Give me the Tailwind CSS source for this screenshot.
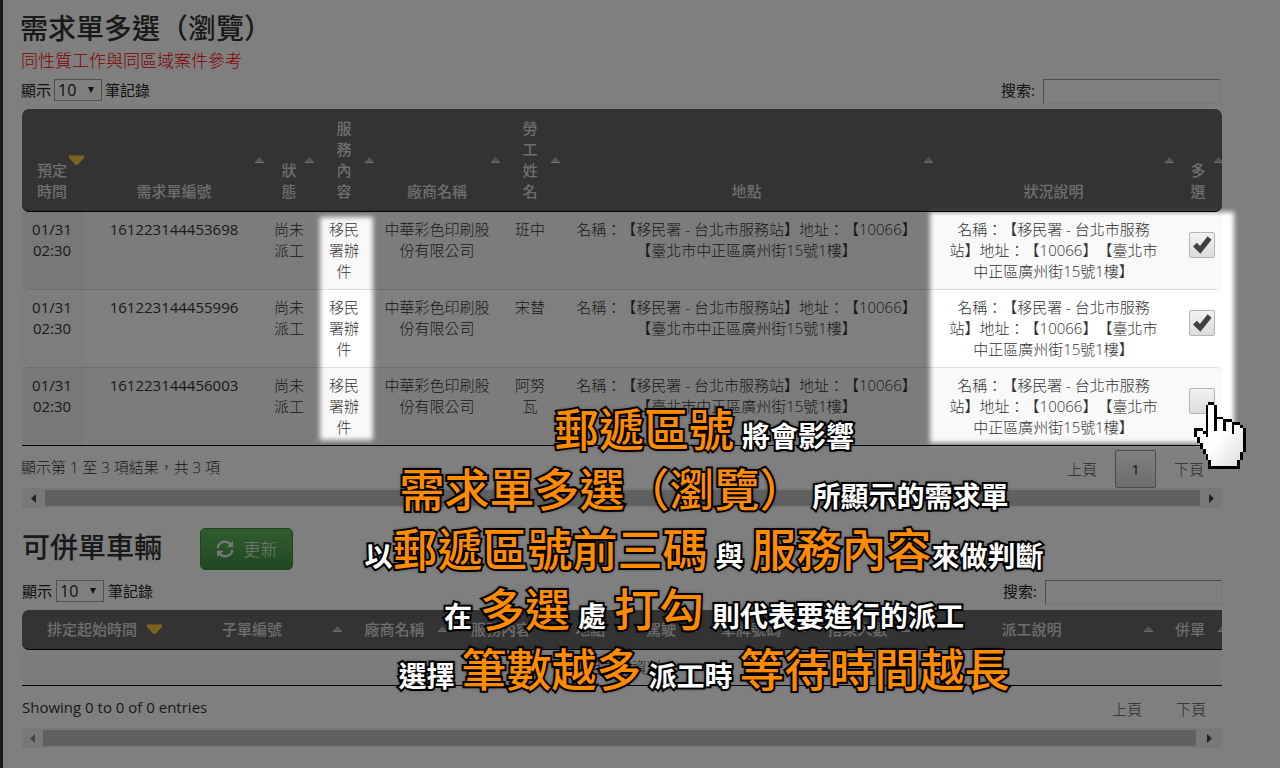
<!DOCTYPE html>
<html lang="zh-Hant">
<head>
<meta charset="utf-8">
<title>需求單多選（瀏覽）</title>
<script src="https://cdn.jsdelivr.net/npm/@tailwindcss/browser@4"></script>
</head>
<body class="relative min-h-screen overflow-hidden bg-white font-['Open_Sans','Noto_Sans_CJK_TC',sans-serif] text-[15px] leading-[21px] text-[#333] [text-spacing-trim:space-all]">
<svg class="hidden" aria-hidden="true">
  <symbol id="up" viewBox="0 0 9 7"><path d="M4.5 0L9 5H0z" fill="#aaa"/><path d="M0 5h9v1H0z" fill="#ddd"/></symbol>
  <symbol id="down" viewBox="0 0 15 10"><path d="M0 0h15v3L8.500 10h-2L0 3z" fill="#f0c64a"/><path d="M0 0h15v1H0z" fill="#c99a2e"/></symbol>
  <symbol id="tick" viewBox="0 0 20 20"><path d="M1 11.500L4.800 7.800L8 11L15.600 1.200L19.600 4.800L8.400 18.800z" fill="#414141"/></symbol>
</svg>

<main class="min-h-screen border-l-3 border-[#333] pr-[58px] pt-2">
  <h1 class="pl-[17px] text-[28px] font-medium leading-10">需求單多選（瀏覽）</h1>
  <p class="pl-[18px] text-[17px] font-light leading-[26px] text-[#f00]">同性質工作與同區域案件參考</p>

  <div class="mt-[5px] flex h-[30px] items-start justify-between pl-[18px] pr-[2px] text-[#222]">
    <label class="flex items-center gap-[3px]">顯示
      <span class="relative block">
        <select class="block h-[22px] w-12 appearance-none border border-[#a0a0a0] bg-white pl-[3px] text-base leading-5"><option>10</option></select>
        <svg class="pointer-events-none absolute right-2 top-2 h-[6px] w-[6px]" viewBox="0 0 6 6"><path d="M0 0h6L3 6z" fill="#222"/></svg>
      </span>筆記錄</label>
    <label class="flex items-start gap-2"><span class="leading-[22px]">搜索:</span><input type="search" class="h-[25px] w-[177px] appearance-none border border-b-[#eee] border-l-[#999] border-r-[#eee] border-t-[#999] bg-white px-1"></label>
  </div>

  <div class="overflow-hidden pl-[19px]">
    <table class="w-full table-fixed border-separate border-spacing-0 border-b border-black text-center font-light">
      <colgroup><col class="w-[62px]"><col class="w-[180px]"><col class="w-[50px]"><col class="w-[60px]"><col class="w-[126px]"><col class="w-[60px]"><col><col class="w-[241px]"><col class="w-[48px]"></colgroup>
      <thead class="text-[#ddd]">
        <tr>
          <th class="relative rounded-l-[7px] border-b border-black bg-[#666] pl-3 pr-[14px] py-[9px] align-bottom font-medium">預定時間<svg class="absolute right-0 top-[46px] h-[10px] w-[15px]"><use href="#down"/></svg></th>
          <th class="relative border-b border-black bg-[#666] py-[9px] align-bottom font-medium">需求單編號<svg class="absolute right-0 top-12 h-[7px] w-[9px]"><use href="#up"/></svg></th>
          <th class="relative border-b border-black bg-[#666] px-4 py-[9px] align-bottom font-medium">狀態<svg class="absolute right-0 top-12 h-[7px] w-[9px]"><use href="#up"/></svg></th>
          <th class="relative border-b border-black bg-[#666] px-5 py-[9px] align-bottom font-medium">服務內容<svg class="absolute right-0 top-12 h-[7px] w-[9px]"><use href="#up"/></svg></th>
          <th class="relative border-b border-black bg-[#666] py-[9px] align-bottom font-medium">廠商名稱<svg class="absolute right-0 top-12 h-[7px] w-[9px]"><use href="#up"/></svg></th>
          <th class="relative border-b border-black bg-[#666] px-5 py-[9px] align-bottom font-medium">勞工姓名<svg class="absolute right-0 top-12 h-[7px] w-[9px]"><use href="#up"/></svg></th>
          <th class="relative border-b border-black bg-[#666] py-[9px] align-bottom font-medium">地點<svg class="absolute right-0 top-12 h-[7px] w-[9px]"><use href="#up"/></svg></th>
          <th class="relative border-b border-black bg-[#666] py-[9px] align-bottom font-medium">狀況說明<svg class="absolute right-0 top-12 h-[7px] w-[9px]"><use href="#up"/></svg></th>
          <th class="relative overflow-hidden rounded-r-[7px] border-b border-black bg-[#666] px-4 py-[9px] align-bottom font-medium">多選<svg class="absolute -right-px top-12 h-[7px] w-[9px]"><use href="#up"/></svg></th>
        </tr>
      </thead>
      <tbody class="align-top">
        <tr class="bg-[#f9f9f9]">
          <td class="rounded-bl-md bg-[#f1f1f1] pl-[6px] pr-2 py-[7px] font-normal">01/31 02:30</td>
          <td class="py-[7px] font-normal">161223144453698</td>
          <td class="px-2 py-[7px]">尚未派工</td>
          <td class="px-[14px] py-[7px]">移民署辦件</td>
          <td class="px-[10px] py-[7px]">中華彩色印刷股份有限公司</td>
          <td class="px-[14px] py-[7px]">班中</td>
          <td class="px-4 py-[7px]">名稱：【移民署 - 台北市服務站】地址：【10066】【臺北市中正區廣州街15號1樓】</td>
          <td class="px-3 py-[7px]">名稱：【移民署 - 台北市服務站】地址：【10066】【臺北市中正區廣州街15號1樓】</td>
          <td class="pl-[15px] pt-5"><label class="relative block h-[26px] w-[26px]"><input type="checkbox" checked aria-label="選擇 161223144453698" class="peer block h-[26px] w-[26px] appearance-none rounded-xs border border-[#b5b5b5] bg-linear-to-b from-[#f2f2f2] to-[#dcdcdc]"><svg class="absolute left-[3px] top-[3px] hidden h-5 w-5 peer-checked:block"><use href="#tick"/></svg></label></td>
        </tr>
        <tr>
          <td class="rounded-tl-md border-t border-[#ddd] bg-[#fafafa] pl-[6px] pr-2 py-[7px] font-normal">01/31 02:30</td>
          <td class="border-t border-[#ddd] py-[7px] font-normal">161223144455996</td>
          <td class="border-t border-[#ddd] px-2 py-[7px]">尚未派工</td>
          <td class="border-t border-[#ddd] px-[14px] py-[7px]">移民署辦件</td>
          <td class="border-t border-[#ddd] px-[10px] py-[7px]">中華彩色印刷股份有限公司</td>
          <td class="border-t border-[#ddd] px-[14px] py-[7px]">宋替</td>
          <td class="border-t border-[#ddd] px-4 py-[7px]">名稱：【移民署 - 台北市服務站】地址：【10066】【臺北市中正區廣州街15號1樓】</td>
          <td class="border-t border-[#ddd] px-3 py-[7px]">名稱：【移民署 - 台北市服務站】地址：【10066】【臺北市中正區廣州街15號1樓】</td>
          <td class="rounded-tr-md border-t border-[#ddd] pl-[15px] pt-5"><label class="relative block h-[26px] w-[26px]"><input type="checkbox" checked aria-label="選擇 161223144455996" class="peer block h-[26px] w-[26px] appearance-none rounded-xs border border-[#b5b5b5] bg-linear-to-b from-[#f2f2f2] to-[#dcdcdc]"><svg class="absolute left-[3px] top-[3px] hidden h-5 w-5 peer-checked:block"><use href="#tick"/></svg></label></td>
        </tr>
        <tr class="bg-[#f9f9f9]">
          <td class="rounded-tl-md border-t border-[#ddd] bg-[#f1f1f1] pl-[6px] pr-2 py-[7px] font-normal">01/31 02:30</td>
          <td class="border-t border-[#ddd] py-[7px] font-normal">161223144456003</td>
          <td class="border-t border-[#ddd] px-2 py-[7px]">尚未派工</td>
          <td class="border-t border-[#ddd] px-[14px] py-[7px]">移民署辦件</td>
          <td class="border-t border-[#ddd] px-[10px] py-[7px]">中華彩色印刷股份有限公司</td>
          <td class="border-t border-[#ddd] px-[14px] py-[7px]">阿努瓦</td>
          <td class="border-t border-[#ddd] px-4 py-[7px]">名稱：【移民署 - 台北市服務站】地址：【10066】【臺北市中正區廣州街15號1樓】</td>
          <td class="border-t border-[#ddd] px-3 py-[7px]">名稱：【移民署 - 台北市服務站】地址：【10066】【臺北市中正區廣州街15號1樓】</td>
          <td class="rounded-tr-md border-t border-[#ddd] pl-[15px] pt-5"><label class="relative block h-[26px] w-[26px]"><input type="checkbox" aria-label="選擇 161223144456003" class="peer block h-[26px] w-[26px] appearance-none rounded-xs border border-[#b5b5b5] bg-linear-to-b from-[#f2f2f2] to-[#dcdcdc]"><svg class="absolute left-[3px] top-[3px] hidden h-5 w-5 peer-checked:block"><use href="#tick"/></svg></label></td>
        </tr>
      </tbody>
    </table>
  </div>

  <div class="mt-1 flex h-[38px] items-center justify-between pl-[18px] font-light">
    <p class="pb-1">顯示第 1 至 3 項結果，共 3 項</p>
    <nav class="flex gap-[2px] pr-[2px]">
      <button class="h-[38px] px-4 text-[#555]">上頁</button>
      <button class="h-[38px] w-[41px] rounded-xs border border-[#979797] bg-linear-to-b from-white to-[#dcdcdc] font-normal">1</button>
      <button class="h-[38px] px-4 text-[#555]">下頁</button>
    </nav>
  </div>
  <div class="ml-[19px] flex h-5 items-center bg-[#f1f1f1]">
    <button class="flex h-5 w-[23px] items-center justify-center" aria-label="向左捲動"><svg class="h-[9px] w-[5px]" viewBox="0 0 5 9"><path d="M5 0v9L0 4.500z" fill="#444"/></svg></button>
    <div class="h-4 flex-1 bg-[#c1c1c1]"></div>
    <button class="flex h-5 w-[22px] items-center justify-center" aria-label="向右捲動"><svg class="h-[9px] w-[5px]" viewBox="0 0 5 9"><path d="M0 0v9l5-4.500z" fill="#444"/></svg></button>
  </div>

  <div class="mt-5 flex h-[42px] items-center gap-[38px] pl-[19px]">
    <h2 class="pb-1 text-[28px] font-medium leading-10">可併單車輛</h2>
    <button class="flex h-[42px] w-[93px] items-center justify-center gap-[10px] rounded-[5px] border border-[#3f8a3f] bg-linear-to-b from-[#62b862] to-[#429142] text-[17px] font-light text-[#eee]">
      <svg class="h-[18px] w-[18px]" viewBox="0 0 18 18" fill="none" stroke="#eee" stroke-width="2.400"><path d="M1.600 8.200C2 4.500 5 1.800 9 1.800c2.300 0 4 .8 5.400 2.300"/><path d="M16.400 9.800C16 13.500 13 16.200 9 16.200c-2.300 0-4-.8-5.400-2.300"/><path d="M17 .6v6.600h-6.600zM1 17.400v-6.600h6.600z" fill="#eee" stroke="none"/></svg>更新</button>
  </div>

  <div class="mt-[10px] flex h-[30px] items-start justify-between pl-[19px] text-[#222]">
    <label class="flex items-center gap-1">顯示
      <span class="relative block">
        <select class="block h-[22px] w-12 appearance-none border border-[#a0a0a0] bg-white pl-[3px] text-base leading-5"><option>10</option></select>
        <svg class="pointer-events-none absolute right-2 top-2 h-[6px] w-[6px]" viewBox="0 0 6 6"><path d="M0 0h6L3 6z" fill="#222"/></svg>
      </span>筆記錄</label>
    <label class="flex items-start gap-2"><span class="leading-[22px]">搜索:</span><input type="search" class="h-[25px] w-[177px] appearance-none border border-b-[#eee] border-l-[#999] border-r-[#eee] border-t-[#999] bg-white px-1"></label>
  </div>

  <div class="ml-[19px] overflow-hidden">
    <table class="w-[calc(100%+5px)] table-fixed border-separate border-spacing-0 border-b border-black text-center">
      <colgroup><col class="w-[140px]"><col class="w-[180px]"><col class="w-[105px]"><col class="w-[108px]"><col class="w-[70px]"><col class="w-[72px]"><col class="w-[108px]"><col class="w-[105px]"><col><col class="w-[74px]"></colgroup>
      <thead class="text-[#ddd]">
        <tr>
          <th class="relative rounded-l-[7px] border-b border-black bg-[#666] py-[9px] font-medium">排定起始時間<svg class="absolute right-0 top-[14px] h-[10px] w-[15px]"><use href="#down"/></svg></th>
          <th class="relative border-b border-black bg-[#666] py-[9px] font-medium">子單編號<svg class="absolute right-0 top-4 h-[7px] w-[9px]"><use href="#up"/></svg></th>
          <th class="relative border-b border-black bg-[#666] py-[9px] font-medium">廠商名稱<svg class="absolute right-0 top-4 h-[7px] w-[9px]"><use href="#up"/></svg></th>
          <th class="relative border-b border-black bg-[#666] py-[9px] font-medium">服務內容<svg class="absolute right-0 top-4 h-[7px] w-[9px]"><use href="#up"/></svg></th>
          <th class="relative border-b border-black bg-[#666] py-[9px] font-medium">地點<svg class="absolute right-0 top-4 h-[7px] w-[9px]"><use href="#up"/></svg></th>
          <th class="relative border-b border-black bg-[#666] py-[9px] font-medium">駕駛<svg class="absolute right-0 top-4 h-[7px] w-[9px]"><use href="#up"/></svg></th>
          <th class="relative border-b border-black bg-[#666] py-[9px] font-medium">車牌號碼<svg class="absolute right-0 top-4 h-[7px] w-[9px]"><use href="#up"/></svg></th>
          <th class="relative border-b border-black bg-[#666] py-[9px] font-medium">搭乘人數<svg class="absolute right-0 top-4 h-[7px] w-[9px]"><use href="#up"/></svg></th>
          <th class="relative border-b border-black bg-[#666] py-[9px] font-medium">派工說明<svg class="absolute right-0 top-4 h-[7px] w-[9px]"><use href="#up"/></svg></th>
          <th class="relative border-b border-black bg-[#666] py-[9px] font-medium">併單<svg class="absolute right-0 top-4 h-[7px] w-[9px]"><use href="#up"/></svg></th>
        </tr>
      </thead>
      <tbody><tr><td colspan="10" class="rounded-md bg-[#f9f9f9] py-[7px] font-light">目前無資料</td></tr></tbody>
    </table>
  </div>

  <div class="mt-1 flex h-[38px] items-center justify-between pl-[19px]">
    <p class="pb-1">Showing 0 to 0 of 0 entries</p>
    <nav class="flex gap-[2px] font-light">
      <button class="h-[38px] px-4 text-[#555]">上頁</button>
      <button class="h-[38px] px-4 text-[#555]">下頁</button>
    </nav>
  </div>
  <div class="ml-[19px] flex h-5 items-center bg-[#f1f1f1]">
    <button class="flex h-5 w-[21px] items-center justify-center" aria-label="向左捲動"><svg class="h-[9px] w-[5px]" viewBox="0 0 5 9"><path d="M5 0v9L0 4.500z" fill="#888"/></svg></button>
    <div class="h-4 flex-1 bg-[#c1c1c1]"></div>
    <button class="flex h-5 w-[26px] items-center justify-center" aria-label="向右捲動"><svg class="h-[9px] w-[5px]" viewBox="0 0 5 9"><path d="M0 0v9l5-4.500z" fill="#444"/></svg></button>
  </div>
</main>

<!-- Dimming layer with two soft-edged spotlights -->
<svg class="pointer-events-none absolute inset-0 h-full w-full" aria-hidden="true">
  <defs>
    <filter id="soft" filterUnits="userSpaceOnUse" x="0" y="0" width="2000" height="1000"><feGaussianBlur stdDeviation="2.500"/></filter>
    <mask id="spots" maskUnits="userSpaceOnUse" x="0" y="0" width="100%" height="100%">
      <rect width="100%" height="100%" fill="#fff"/>
      <g filter="url(#soft)"><rect x="320" y="217" width="53" height="223"/><rect x="930" y="212" width="304" height="231"/></g>
    </mask>
  </defs>
  <rect width="100%" height="100%" fill="#000" fill-opacity=".5" mask="url(#spots)"/>
</svg>

<!-- Tutorial caption -->
<div class="pointer-events-none absolute left-32 right-0 top-[400px] whitespace-nowrap text-center text-[28px] font-bold leading-[60px] text-white [-webkit-text-stroke:4px_#000] [paint-order:stroke_fill] [text-shadow:0_0_4px_#000]">
  <p class="flex h-[60px] items-baseline justify-center gap-2"><strong class="text-[45px] font-medium text-[#ff8c00]">郵遞區號</strong><span>將會影響</span></p>
  <p class="flex h-[60px] items-baseline justify-center gap-2"><strong class="text-[45px] font-medium text-[#ff8c00]">需求單多選（瀏覽）</strong><span>所顯示的需求單</span></p>
  <p class="flex h-[60px] items-baseline justify-center gap-2"><span class="flex items-baseline">以<strong class="text-[45px] font-medium text-[#ff8c00]">郵遞區號前三碼</strong></span><span>與</span><span class="flex items-baseline"><strong class="text-[45px] font-medium text-[#ff8c00]">服務內容</strong>來做判斷</span></p>
  <p class="flex h-[60px] items-baseline justify-center gap-2"><span>在</span><strong class="text-[45px] font-medium text-[#ff8c00]">多選</strong><span>處</span><strong class="text-[45px] font-medium text-[#ff8c00]">打勾</strong><span>則代表要進行的派工</span></p>
  <p class="flex h-[60px] items-baseline justify-center gap-[7px]"><span>選擇</span><strong class="text-[45px] font-medium text-[#ff8c00]">筆數越多</strong><span>派工時</span><strong class="text-[45px] font-medium text-[#ff8c00]">等待時間越長</strong></p>
</div>

<!-- Hand pointer on an 18 x 23 pixel grid -->
<svg class="pointer-events-none absolute left-[1194px] top-[402px] h-[67px] w-[52px]" viewBox="0 0 18 23" preserveAspectRatio="none" shape-rendering="crispEdges" aria-hidden="true">
  <defs><linearGradient id="hand" x1="0" y1="0" x2="1" y2="1"><stop offset=".5" stop-color="#fff"/><stop offset="1" stop-color="#ddd"/></linearGradient></defs>
  <path fill="url(#hand)" d="M5 1h2v5h3v1h3v1h3v1h1v8h-1v3h-1v2H6v-2H5v-2H4v-2H3v-2H2v-2H1v-2h3V1z"/>
  <path d="M5 0h2v1H5zM4 1h1v11H4zM7 1h1v9H7zM8 5h2v1H8zM10 6h1v4h-1zM11 6h2v1h-2zM13 7h1v4h-1zM14 7h2v1h-2zM16 8h1v1h-1zM17 9h1v8h-1zM16 17h1v3h-1zM15 20h1v3h-1zM5 22h10v1H5zM5 20h1v2H5zM4 18h1v2H4zM3 16h1v2H3zM2 14h1v2H2zM1 12h1v2H1zM0 10h1v2H0zM0 9h3v1H0zM3 10h1v1H3z"/>
</svg>
</body>
</html>
